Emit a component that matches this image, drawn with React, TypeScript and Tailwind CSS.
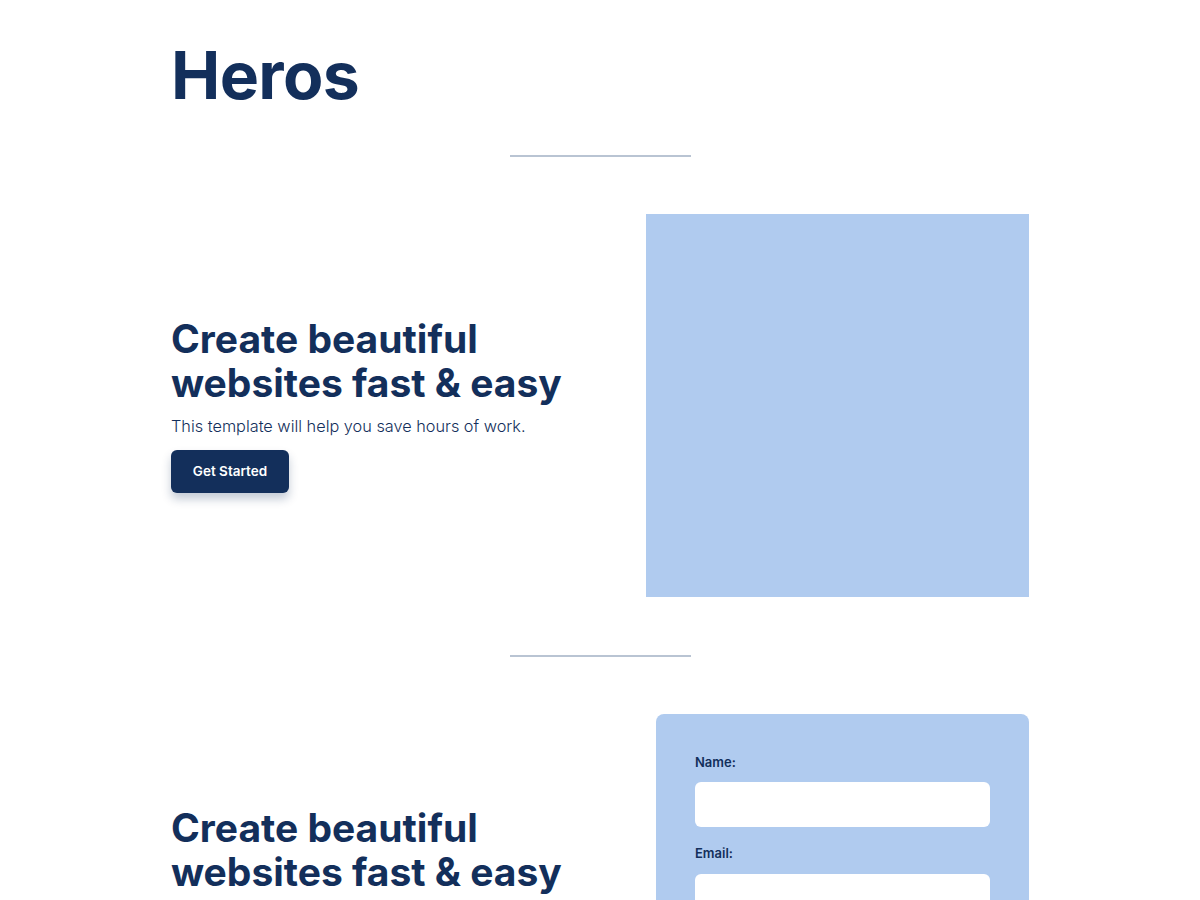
export default function App() {
  return (
    <div className="min-h-screen bg-white" style={{ fontFamily: "Inter, 'Noto Sans', sans-serif" }}>
      <div className="mx-auto w-[858px] pt-[37px]">
        <h1 className="text-[66px] font-bold leading-[76px] tracking-[-0.01em] text-[#132f5b]">Heros</h1>
        <div className="mt-[42px] flex justify-center">
          <div className="h-[2px] w-[181px] bg-[#b9c4d3]" />
        </div>
        <section className="mt-[57px] flex items-center justify-between">
          <div className="flex flex-col pb-[2px]">
            <h2 className="text-[39px] font-bold leading-[44px] text-[#132f5b]">
              Create beautiful
              <br />
              websites fast &amp; easy
            </h2>
            <p className="mt-[9px] text-[16.3px] leading-[24px] font-light text-[#132f5b]">This template will help you save hours of work.</p>
            <button className="mt-[12px] h-[43px] w-[118px] rounded-[6px] bg-[#132f5b] text-[13.5px] font-semibold text-white shadow-[0_6px_10px_rgba(19,47,91,0.25)]">
              Get Started
            </button>
          </div>
          <div className="h-[383px] w-[383px] bg-[#b0cbef]" />
        </section>
        <div className="mt-[58px] flex justify-center">
          <div className="h-[2px] w-[181px] bg-[#b9c4d3]" />
        </div>
        <section className="mt-[57px] flex items-start justify-between">
          <div className="flex flex-col pt-[92px]">
            <h2 className="text-[39px] font-bold leading-[44px] text-[#132f5b]">
              Create beautiful
              <br />
              websites fast &amp; easy
            </h2>
          </div>
          <div className="w-[373px] rounded-[8px] bg-[#b0cbef] px-[39px] pt-[40px] pb-[40px]">
            <label className="block text-[13px] leading-[16px] font-semibold text-[#132f5b]">Name:</label>
            <div className="mt-[12px] h-[45px] w-[295px] rounded-[6px] bg-white" />
            <label className="mt-[18px] block text-[13px] leading-[16px] font-semibold text-[#132f5b]">Email:</label>
            <div className="mt-[13px] h-[45px] w-[295px] rounded-[6px] bg-white" />
            <label className="mt-[18px] block text-[13px] leading-[16px] font-semibold text-[#132f5b]">Message:</label>
            <div className="mt-[13px] h-[120px] w-[295px] rounded-[6px] bg-white" />
          </div>
        </section>
      </div>
    </div>
  );
}
